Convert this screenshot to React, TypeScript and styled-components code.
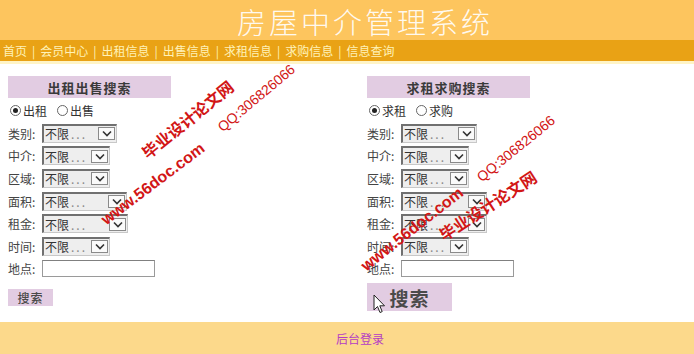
import React from "react";
import styled, { createGlobalStyle } from "styled-components";

const GlobalStyle = createGlobalStyle`
  body {
    margin: 0;
    background: #ffffff;
    font-family: "Noto Sans CJK SC", "DejaVu Sans", sans-serif;
  }
`;

const navItems = ["首页", "会员中心", "出租信息", "出售信息", "求租信息", "求购信息", "信息查询"];

type Field = { label: string; width?: number; input?: boolean };

const leftFields: Field[] = [
  { label: "类别", width: 75 },
  { label: "中介", width: 68 },
  { label: "区域", width: 68 },
  { label: "面积", width: 85 },
  { label: "租金", width: 86 },
  { label: "时间", width: 68 },
  { label: "地点", input: true },
];

const rightFields: Field[] = [
  { label: "类别", width: 76 },
  { label: "中介", width: 68 },
  { label: "区域", width: 68 },
  { label: "面积", width: 86 },
  { label: "租金", width: 86 },
  { label: "时间", width: 68 },
  { label: "地点", input: true },
];

const Chevron = () => (
  <svg width="10" height="7" viewBox="0 0 10 7">
    <path d="M1 1.5 L5 5.5 L9 1.5" fill="none" stroke="#333" strokeWidth="1.6" />
  </svg>
);

const SearchPanel = ({
  title,
  radios,
  fields,
  big,
  offset,
}: {
  title: string;
  radios: [string, string];
  fields: Field[];
  big?: boolean;
  offset: number;
}) => (
  <Panel $offset={offset}>
    <PanelTitle>{title}</PanelTitle>
    <RadioRow>
      <RadioItem>
        <RadioDot $checked />
        {radios[0]}
      </RadioItem>
      <RadioItem>
        <RadioDot />
        {radios[1]}
      </RadioItem>
    </RadioRow>
    {fields.map((f) => (
      <FieldRow key={f.label}>
        <FieldLabel>{f.label}:</FieldLabel>
        {f.input ? (
          <TextBox />
        ) : (
          <SelectBox $w={f.width || 68}>
            <SelectText>
              不限<Dots>...</Dots>
            </SelectText>
            <SelectArrow>
              <Chevron />
            </SelectArrow>
          </SelectBox>
        )}
      </FieldRow>
    ))}
    <SearchButton $big={big}>搜索</SearchButton>
  </Panel>
);

const App = () => {
  return (
    <Page>
      <GlobalStyle />
      <Header>
        <SiteTitle>房屋中介管理系统</SiteTitle>
      </Header>
      <Nav>
        {navItems.map((item, i) => (
          <React.Fragment key={item}>
            {i > 0 && <NavSep>|</NavSep>}
            <NavLink>{item}</NavLink>
          </React.Fragment>
        ))}
      </Nav>
      <Main>
        <SearchPanel
          title="出租出售搜索"
          radios={["出租", "出售"]}
          fields={leftFields}
          offset={8}
        />
        <SearchPanel
          title="求租求购搜索"
          radios={["求租", "求购"]}
          fields={rightFields}
          big
          offset={20}
        />
      </Main>
      <Footer>
        <FooterLink>后台登录</FooterLink>
      </Footer>

      <Mark $x={150} $y={162} $size={16} $bold $deg={-39}>毕业设计论文网</Mark>
      <Mark $x={108} $y={228} $size={16} $bold $deg={-37}>www.56doc.com</Mark>
      <Mark $x={224} $y={134} $size={14} $deg={-40}>QQ:306826066</Mark>
      <Mark $x={483} $y={184} $size={14} $deg={-39}>QQ:306826066</Mark>
      <Mark $x={446} $y={244} $size={16} $bold $deg={-33}>毕业设计论文网</Mark>
      <Mark $x={368} $y={274} $size={16} $bold $deg={-38}>www.56doc.com</Mark>

      <Cursor width="13" height="20" viewBox="0 0 13 20">
        <path
          d="M1 1 L1 16 L4.5 12.5 L7 18.5 L9.2 17.6 L6.8 11.8 L11.5 11.8 Z"
          fill="#ffffff"
          stroke="#222"
          strokeWidth="1"
          strokeLinejoin="round"
        />
      </Cursor>
    </Page>
  );
};

const Page = styled.div`
  position: relative;
  width: 694px;
  height: 354px;
  overflow: hidden;
  background: #ffffff;
`;

const Header = styled.div`
  height: 40px;
  background: #fdc55e;
  display: flex;
  align-items: center;
  justify-content: center;
  padding-left: 36px;
  box-sizing: border-box;
`;

const SiteTitle = styled.h1`
  margin: 0;
  padding-top: 3px;
  font-family: "Noto Sans CJK SC", sans-serif;
  font-weight: 300;
  font-size: 29px;
  letter-spacing: 3px;
  color: rgba(255, 255, 255, 0.92);
  line-height: 1.1;
`;

const Nav = styled.div`
  height: 21px;
  background: #e9a215;
  border-bottom: 3px solid #fff4c6;
  display: flex;
  align-items: center;
  padding-left: 3px;
  font-size: 12px;
  color: #fff2b8;
`;

const NavLink = styled.span`
  cursor: pointer;
`;

const NavSep = styled.span`
  margin: 0 5px;
  color: #fff2b8;
`;

const Main = styled.div`
  height: 258px;
  display: grid;
  grid-template-columns: 347px 347px;
`;

const Panel = styled.div<{ $offset: number }>`
  padding-left: ${(p) => p.$offset}px;
  padding-top: 12px;
  display: flex;
  flex-direction: column;
  align-items: flex-start;
`;

const PanelTitle = styled.div`
  width: 163px;
  height: 22px;
  background: #e2cce2;
  display: flex;
  align-items: center;
  justify-content: center;
  font-size: 13px;
  font-weight: 700;
  color: #3a3a3a;
  letter-spacing: 1px;
`;

const RadioRow = styled.div`
  height: 23px;
  display: flex;
  align-items: center;
  gap: 10px;
  padding-left: 2px;
  padding-top: 1px;
  font-size: 12px;
  color: #333;
`;

const RadioItem = styled.label`
  display: flex;
  align-items: center;
  gap: 2px;
`;

const RadioDot = styled.span<{ $checked?: boolean }>`
  width: 9px;
  height: 9px;
  border-radius: 50%;
  border: 1px solid #666;
  background: #fff;
  display: inline-flex;
  align-items: center;
  justify-content: center;
  &::after {
    content: "";
    width: 5px;
    height: 5px;
    border-radius: 50%;
    background: ${(p) => (p.$checked ? "#222" : "transparent")};
  }
`;

const FieldRow = styled.div`
  height: 22.6px;
  display: flex;
  align-items: center;
`;

const FieldLabel = styled.span`
  width: 34px;
  font-size: 12px;
  color: #444;
`;

const SelectBox = styled.div<{ $w: number }>`
  width: ${(p) => p.$w}px;
  height: 19px;
  box-sizing: border-box;
  border-style: solid;
  border-width: 2px 1px 1px 2px;
  border-color: #707070 #c8c8c8 #c8c8c8 #707070;
  background: #eeeeee;
  display: flex;
  align-items: center;
`;

const SelectText = styled.span`
  font-size: 12px;
  color: #333;
  padding-left: 1px;
`;

const Dots = styled.span`
  color: #888;
  letter-spacing: 2px;
  padding-left: 2px;
`;

const SelectArrow = styled.span`
  margin-left: auto;
  margin-right: 1px;
  width: 17px;
  height: 13px;
  box-sizing: border-box;
  border: 1px solid #8a8a8a;
  background: #fafafa;
  display: flex;
  align-items: center;
  justify-content: center;
`;

const TextBox = styled.div`
  width: 113px;
  height: 17px;
  box-sizing: border-box;
  border: 1px solid #9a9a9a;
  border-top-color: #808080;
  background: #fff;
`;

const SearchButton = styled.button<{ $big?: boolean }>`
  margin-top: ${(p) => (p.$big ? "3px" : "9px")};
  width: ${(p) => (p.$big ? "85px" : "45px")};
  height: ${(p) => (p.$big ? "28px" : "17px")};
  border: none;
  padding: 0;
  background: #e2cce2;
  font-family: "Noto Sans CJK SC", sans-serif;
  font-size: ${(p) => (p.$big ? "19px" : "12px")};
  font-weight: ${(p) => (p.$big ? 700 : 500)};
  color: #4a4a4a;
  letter-spacing: 1px;
  display: flex;
  align-items: center;
  justify-content: center;
`;

const Footer = styled.div`
  height: 32px;
  background: #fcd98b;
  display: flex;
  align-items: center;
  justify-content: center;
  padding-left: 26px;
`;

const FooterLink = styled.span`
  font-size: 12px;
  color: #b43cc4;
`;

const Mark = styled.span<{ $x: number; $y: number; $size: number; $bold?: boolean; $deg: number }>`
  position: absolute;
  left: ${(p) => p.$x}px;
  top: ${(p) => p.$y}px;
  transform: translateY(-100%) rotate(${(p) => p.$deg}deg);
  transform-origin: 0 100%;
  font-family: "Liberation Sans", "Noto Sans CJK SC", sans-serif;
  font-size: ${(p) => p.$size}px;
  font-weight: ${(p) => (p.$bold ? 700 : 400)};
  color: #d21616;
  white-space: nowrap;
  line-height: 1;
  pointer-events: none;
`;

const Cursor = styled.svg`
  position: absolute;
  left: 373px;
  top: 294px;
`;

export default App;
